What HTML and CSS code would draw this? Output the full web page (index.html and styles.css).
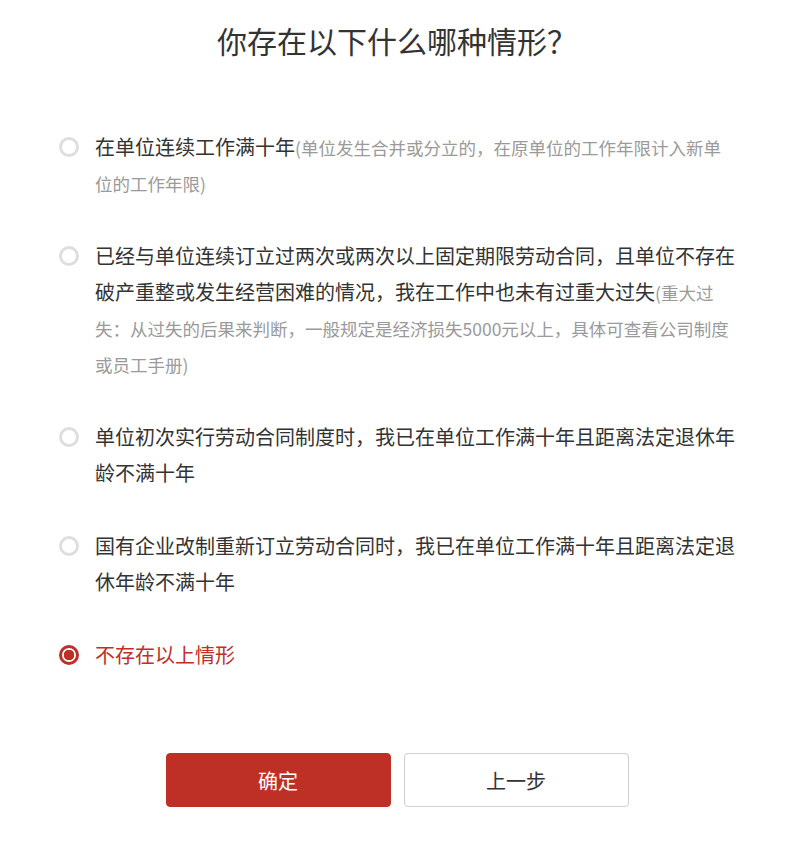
FILE: index.html
```html
<!DOCTYPE html>
<html lang="zh-CN">
<head>
    <meta charset="UTF-8">
    <meta name="viewport" content="width=device-width, initial-scale=1.0">
    <title>你存在以下什么哪种情形？</title>
    <link rel="stylesheet" href="styles.css">
</head>
<body>
    <div class="page">
        <h1 class="titulo">你存在以下什么哪种情形？</h1>

        <form class="opciones">
            <label class="opcion">
                <input type="radio" name="situacion" value="1">
                <span class="texto">在单位连续工作满十年<span class="nota">(单位发生合并或分立的，在原单位的工作年限计入新单位的工作年限)</span></span>
            </label>
            <label class="opcion">
                <input type="radio" name="situacion" value="2">
                <span class="texto">已经与单位连续订立过两次或两次以上固定期限劳动合同，且单位不存在破产重整或发生经营困难的情况，我在工作中也未有过重大过失<span class="nota">(重大过失：从过失的后果来判断，一般规定是经济损失5000元以上，具体可查看公司制度或员工手册)</span></span>
            </label>
            <label class="opcion">
                <input type="radio" name="situacion" value="3">
                <span class="texto">单位初次实行劳动合同制度时，我已在单位工作满十年且距离法定退休年龄不满十年</span>
            </label>
            <label class="opcion">
                <input type="radio" name="situacion" value="4">
                <span class="texto">国有企业改制重新订立劳动合同时，我已在单位工作满十年且距离法定退休年龄不满十年</span>
            </label>
            <label class="opcion">
                <input type="radio" name="situacion" value="5" checked>
                <span class="texto">不存在以上情形</span>
            </label>
        </form>

        <div class="botones">
            <button type="button" class="btn btn-rojo">确定</button>
            <button type="button" class="btn">上一步</button>
        </div>
    </div>
</body>
</html>
```

FILE: styles.css
```css
body {
    margin: 0;
    background: #fff;
    color: #333;
    font-family: "Noto Sans CJK SC", "Noto Sans", sans-serif;
}
.page {
    padding: 20px 59px 0 59px;
}
.titulo {
    margin: 0;
    font-size: 30px;
    font-weight: normal;
    line-height: 40px;
    text-align: center;
    color: #333;
}
.opciones {
    margin-top: 50px;
}
.opcion {
    display: flex;
    gap: 16px;
    padding: 19px 0 18px 0;
    cursor: pointer;
}
.opcion input {
    appearance: none;
    -webkit-appearance: none;
    flex: none;
    width: 20px;
    height: 20px;
    margin: 8px 0 0 0;
    border: 3px solid #dedede;
    border-radius: 50%;
    background: #fff;
    box-sizing: border-box;
}
.opcion input:checked {
    border-color: #be3026;
    background: radial-gradient(circle, #be3026 0, #be3026 5px, #fff 5.5px);
}
.texto {
    font-size: 20px;
    line-height: 36px;
    color: #333;
}
.opcion input:checked + .texto {
    color: #be3026;
}
.nota {
    font-size: 17.5px;
    line-height: 1;
    color: #9a9a9a;
}
.botones {
    display: flex;
    justify-content: center;
    gap: 13px;
    margin-top: 62px;
}
.btn {
    width: 225px;
    height: 54px;
    border: 1px solid #cfcfcf;
    border-radius: 4px;
    background: #fff;
    color: #333;
    font-family: inherit;
    font-size: 20px;
}
.btn-rojo {
    background: #be3026;
    border-color: #be3026;
    color: #fff;
}
```
